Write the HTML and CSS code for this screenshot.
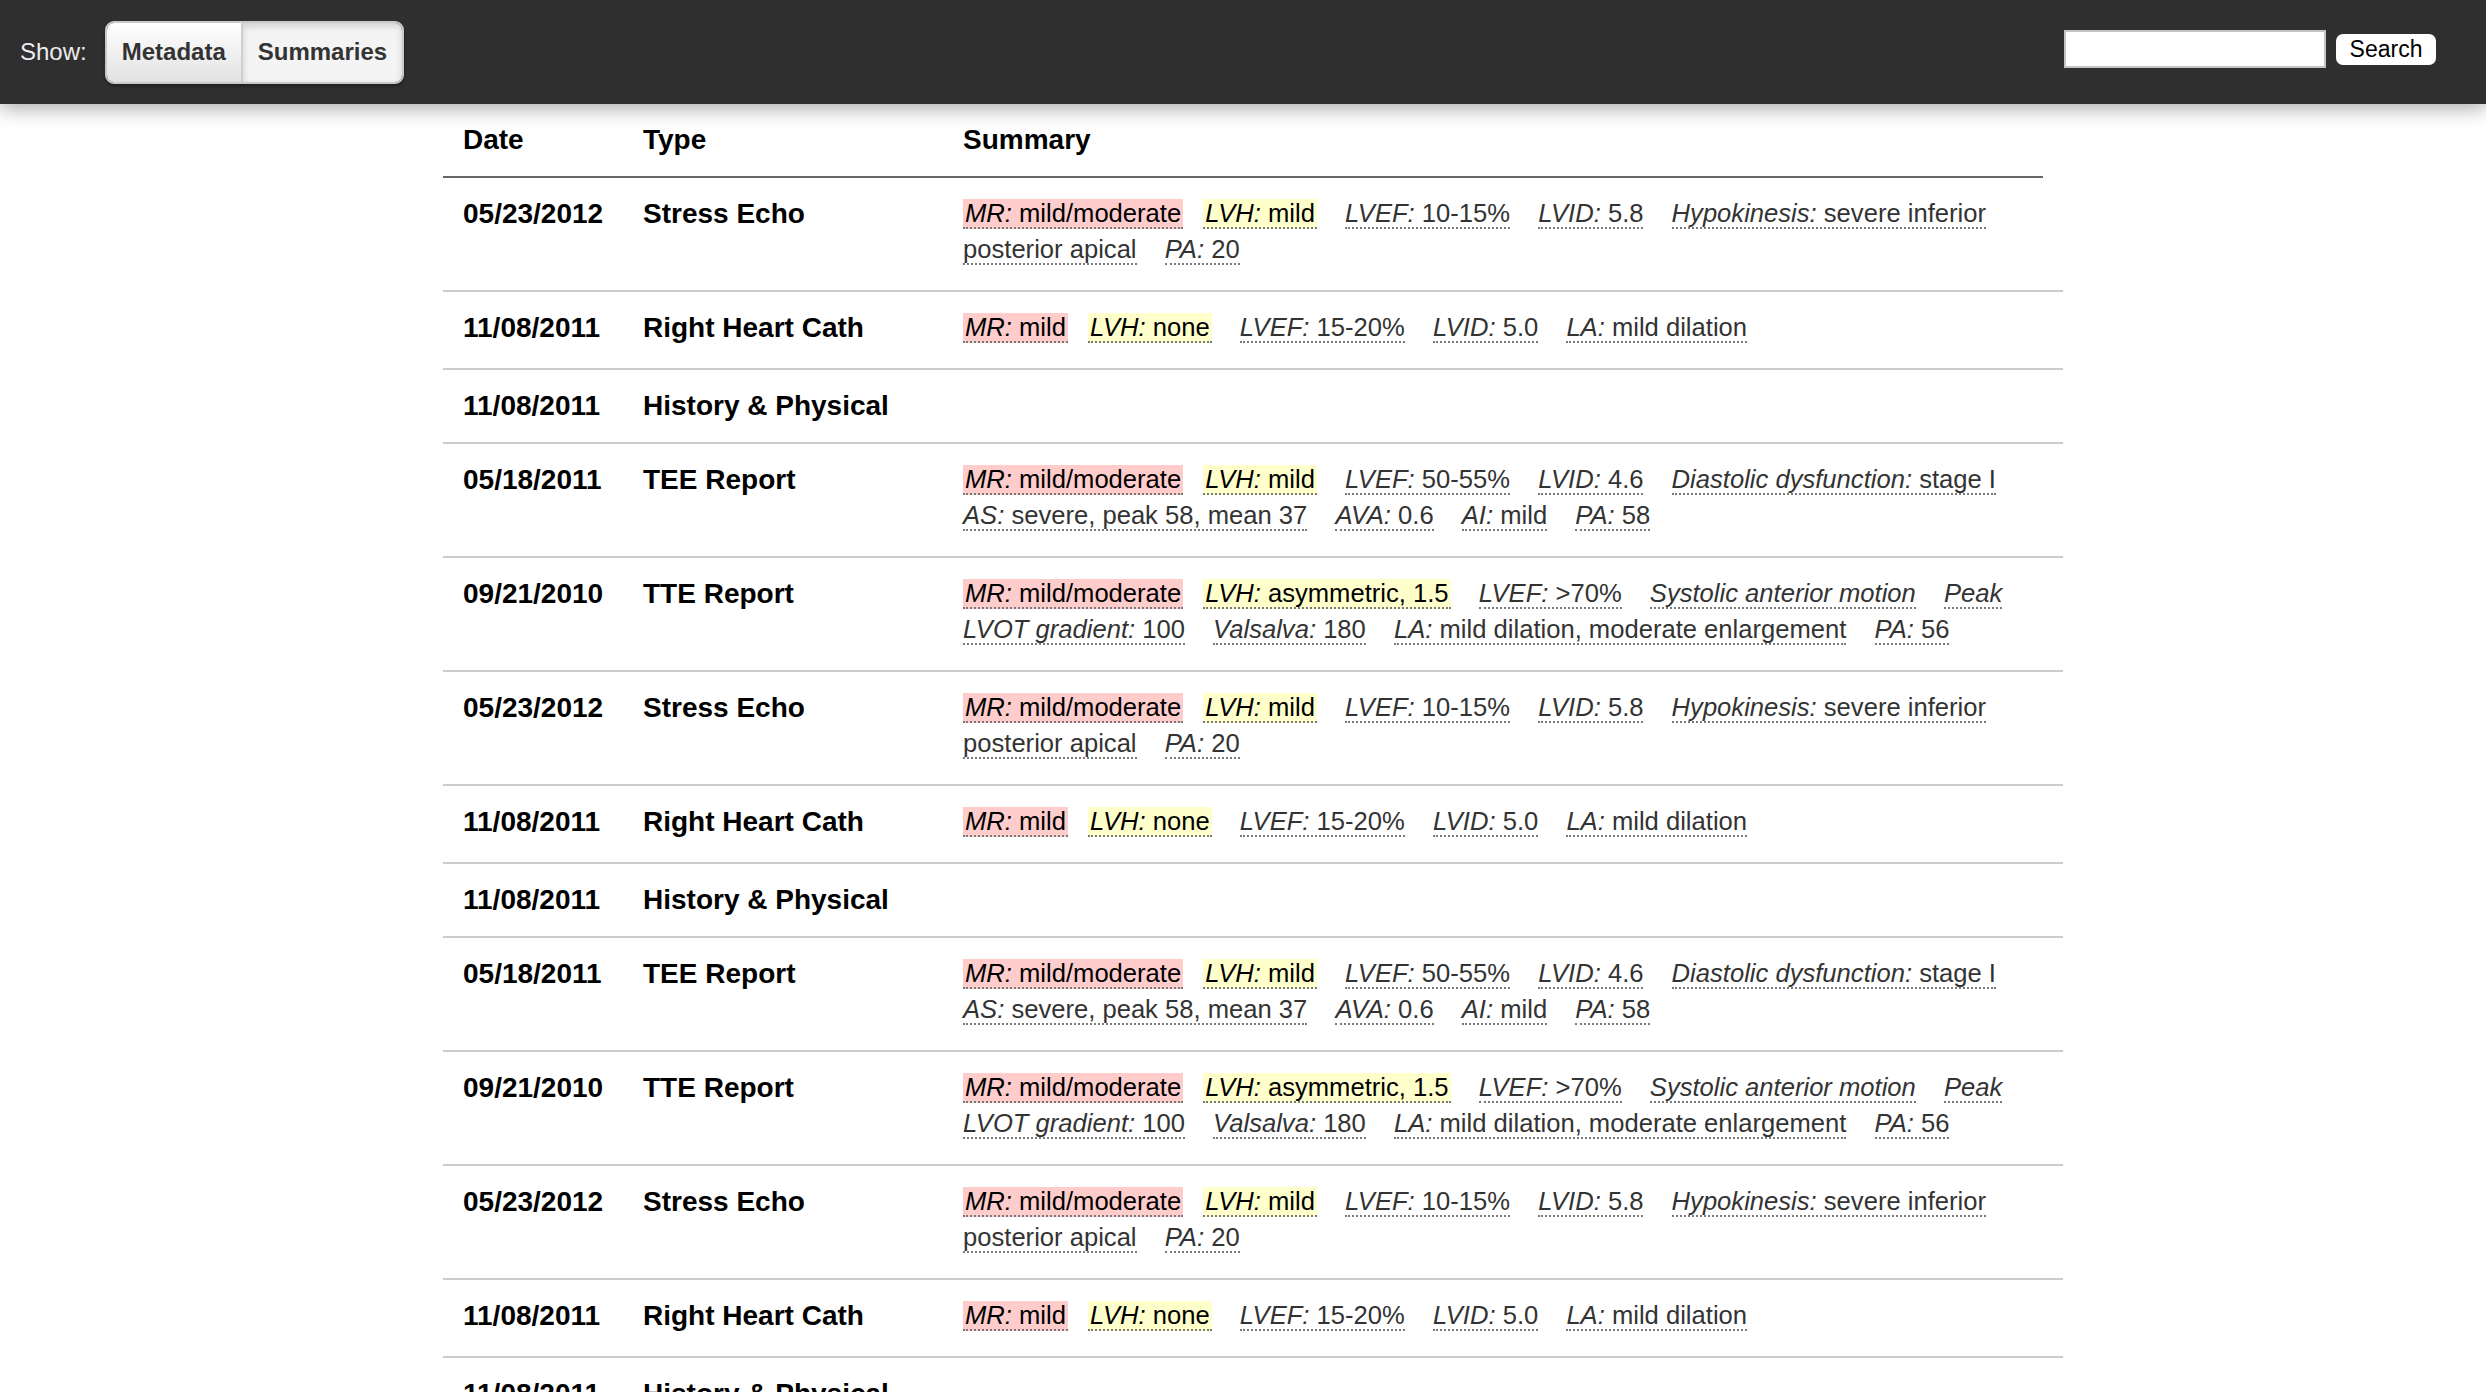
FILE: index.html
```html
<!DOCTYPE html>
<html lang="en">
<head>
<meta charset="utf-8">
<title>Reports</title>
<link rel="stylesheet" href="styles.css">
</head>
<body>
<header class="navbar">
  <div class="nav-left">
    <span class="show-label">Show:</span>
    <div class="btn-group">
      <button class="btn" type="button">Metadata</button>
      <button class="btn active" type="button">Summaries</button>
    </div>
  </div>
  <form class="search">
    <input type="text" class="search-input">
    <button type="button" class="search-btn">Search</button>
  </form>
</header>

<main class="container">
  <div class="thead">
    <div class="th">Date</div>
    <div class="th">Type</div>
    <div class="th">Summary</div>
  </div>

  <div class="row">
    <div class="cell date">05/23/2012</div>
    <div class="cell type">Stress Echo</div>
    <div class="cell summary">
      <span class="it hl hl-red"><i>MR:</i> mild/moderate</span>
      <span class="it hl hl-yellow"><i>LVH:</i> mild</span>
      <span class="it"><i>LVEF:</i> 10-15%</span>
      <span class="it"><i>LVID:</i> 5.8</span>
      <span class="it"><i>Hypokinesis:</i> severe inferior posterior apical</span>
      <span class="it"><i>PA:</i> 20</span>
    </div>
  </div>

  <div class="row">
    <div class="cell date">11/08/2011</div>
    <div class="cell type">Right Heart Cath</div>
    <div class="cell summary">
      <span class="it hl hl-red"><i>MR:</i> mild</span>
      <span class="it hl hl-yellow"><i>LVH:</i> none</span>
      <span class="it"><i>LVEF:</i> 15-20%</span>
      <span class="it"><i>LVID:</i> 5.0</span>
      <span class="it"><i>LA:</i> mild dilation</span>
    </div>
  </div>

  <div class="row">
    <div class="cell date">11/08/2011</div>
    <div class="cell type">History &amp; Physical</div>
    <div class="cell summary"></div>
  </div>

  <div class="row">
    <div class="cell date">05/18/2011</div>
    <div class="cell type">TEE Report</div>
    <div class="cell summary">
      <span class="it hl hl-red"><i>MR:</i> mild/moderate</span>
      <span class="it hl hl-yellow"><i>LVH:</i> mild</span>
      <span class="it"><i>LVEF:</i> 50-55%</span>
      <span class="it"><i>LVID:</i> 4.6</span>
      <span class="it"><i>Diastolic dysfunction:</i> stage I</span>
      <span class="it"><i>AS:</i> severe, peak 58, mean 37</span>
      <span class="it"><i>AVA:</i> 0.6</span>
      <span class="it"><i>AI:</i> mild</span>
      <span class="it"><i>PA:</i> 58</span>
    </div>
  </div>

  <div class="row">
    <div class="cell date">09/21/2010</div>
    <div class="cell type">TTE Report</div>
    <div class="cell summary">
      <span class="it hl hl-red"><i>MR:</i> mild/moderate</span>
      <span class="it hl hl-yellow"><i>LVH:</i> asymmetric, 1.5</span>
      <span class="it"><i>LVEF:</i> &gt;70%</span>
      <span class="it"><i>Systolic anterior motion</i></span>
      <span class="it"><i>Peak LVOT gradient:</i> 100</span>
      <span class="it"><i>Valsalva:</i> 180</span>
      <span class="it"><i>LA:</i> mild dilation, moderate enlargement</span>
      <span class="it"><i>PA:</i> 56</span>
    </div>
  </div>

  <div class="row">
    <div class="cell date">05/23/2012</div>
    <div class="cell type">Stress Echo</div>
    <div class="cell summary">
      <span class="it hl hl-red"><i>MR:</i> mild/moderate</span>
      <span class="it hl hl-yellow"><i>LVH:</i> mild</span>
      <span class="it"><i>LVEF:</i> 10-15%</span>
      <span class="it"><i>LVID:</i> 5.8</span>
      <span class="it"><i>Hypokinesis:</i> severe inferior posterior apical</span>
      <span class="it"><i>PA:</i> 20</span>
    </div>
  </div>

  <div class="row">
    <div class="cell date">11/08/2011</div>
    <div class="cell type">Right Heart Cath</div>
    <div class="cell summary">
      <span class="it hl hl-red"><i>MR:</i> mild</span>
      <span class="it hl hl-yellow"><i>LVH:</i> none</span>
      <span class="it"><i>LVEF:</i> 15-20%</span>
      <span class="it"><i>LVID:</i> 5.0</span>
      <span class="it"><i>LA:</i> mild dilation</span>
    </div>
  </div>

  <div class="row">
    <div class="cell date">11/08/2011</div>
    <div class="cell type">History &amp; Physical</div>
    <div class="cell summary"></div>
  </div>

  <div class="row">
    <div class="cell date">05/18/2011</div>
    <div class="cell type">TEE Report</div>
    <div class="cell summary">
      <span class="it hl hl-red"><i>MR:</i> mild/moderate</span>
      <span class="it hl hl-yellow"><i>LVH:</i> mild</span>
      <span class="it"><i>LVEF:</i> 50-55%</span>
      <span class="it"><i>LVID:</i> 4.6</span>
      <span class="it"><i>Diastolic dysfunction:</i> stage I</span>
      <span class="it"><i>AS:</i> severe, peak 58, mean 37</span>
      <span class="it"><i>AVA:</i> 0.6</span>
      <span class="it"><i>AI:</i> mild</span>
      <span class="it"><i>PA:</i> 58</span>
    </div>
  </div>

  <div class="row">
    <div class="cell date">09/21/2010</div>
    <div class="cell type">TTE Report</div>
    <div class="cell summary">
      <span class="it hl hl-red"><i>MR:</i> mild/moderate</span>
      <span class="it hl hl-yellow"><i>LVH:</i> asymmetric, 1.5</span>
      <span class="it"><i>LVEF:</i> &gt;70%</span>
      <span class="it"><i>Systolic anterior motion</i></span>
      <span class="it"><i>Peak LVOT gradient:</i> 100</span>
      <span class="it"><i>Valsalva:</i> 180</span>
      <span class="it"><i>LA:</i> mild dilation, moderate enlargement</span>
      <span class="it"><i>PA:</i> 56</span>
    </div>
  </div>

  <div class="row">
    <div class="cell date">05/23/2012</div>
    <div class="cell type">Stress Echo</div>
    <div class="cell summary">
      <span class="it hl hl-red"><i>MR:</i> mild/moderate</span>
      <span class="it hl hl-yellow"><i>LVH:</i> mild</span>
      <span class="it"><i>LVEF:</i> 10-15%</span>
      <span class="it"><i>LVID:</i> 5.8</span>
      <span class="it"><i>Hypokinesis:</i> severe inferior posterior apical</span>
      <span class="it"><i>PA:</i> 20</span>
    </div>
  </div>

  <div class="row">
    <div class="cell date">11/08/2011</div>
    <div class="cell type">Right Heart Cath</div>
    <div class="cell summary">
      <span class="it hl hl-red"><i>MR:</i> mild</span>
      <span class="it hl hl-yellow"><i>LVH:</i> none</span>
      <span class="it"><i>LVEF:</i> 15-20%</span>
      <span class="it"><i>LVID:</i> 5.0</span>
      <span class="it"><i>LA:</i> mild dilation</span>
    </div>
  </div>

  <div class="row">
    <div class="cell date">11/08/2011</div>
    <div class="cell type">History &amp; Physical</div>
    <div class="cell summary"></div>
  </div>

  <div class="row">
    <div class="cell date">05/18/2011</div>
    <div class="cell type">TEE Report</div>
    <div class="cell summary">
      <span class="it hl hl-red"><i>MR:</i> mild/moderate</span>
      <span class="it hl hl-yellow"><i>LVH:</i> mild</span>
      <span class="it"><i>LVEF:</i> 50-55%</span>
      <span class="it"><i>LVID:</i> 4.6</span>
      <span class="it"><i>Diastolic dysfunction:</i> stage I</span>
      <span class="it"><i>AS:</i> severe, peak 58, mean 37</span>
      <span class="it"><i>AVA:</i> 0.6</span>
      <span class="it"><i>AI:</i> mild</span>
      <span class="it"><i>PA:</i> 58</span>
    </div>
  </div>
</main>
</body>
</html>
```

FILE: styles.css
```css
* {
  box-sizing: border-box;
}

html, body {
  margin: 0;
  padding: 0;
  background: #fff;
}

body {
  font-family: "Liberation Sans", Arial, Helvetica, sans-serif;
  color: #000;
}

/* ---------- top bar ---------- */
.navbar {
  position: relative;
  z-index: 2;
  height: 104px;
  background: #2f2f2f;
  display: flex;
  align-items: center;
  justify-content: space-between;
  padding: 0 50px 0 20px;
  box-shadow: 0 5px 18px rgba(0, 0, 0, 0.32);
}

.nav-left {
  display: flex;
  align-items: center;
  gap: 18px;
}

.show-label {
  color: #ececec;
  font-size: 24px;
}

.btn-group {
  display: flex;
  height: 63px;
  border: 2px solid #c9c9c9;
  border-radius: 9px;
  overflow: hidden;
  box-shadow: 0 2px 3px rgba(0, 0, 0, 0.35);
}

.btn {
  font-family: "Liberation Sans", Arial, sans-serif;
  font-weight: bold;
  font-size: 24px;
  color: #333;
  border: none;
  margin: 0;
  padding: 0 15px;
  background: linear-gradient(#ffffff, #e2e2e2);
}

.btn + .btn {
  border-left: 2px solid #cfcfcf;
}

.btn.active {
  background: #f4f4f4;
  box-shadow: inset 0 3px 7px rgba(0, 0, 0, 0.16);
}

.search {
  display: flex;
  align-items: center;
  gap: 10px;
  margin: -6px 0 0 0;
}

.search-input {
  width: 262px;
  height: 38px;
  border: 2px solid #c4c4c4;
  background: #fff;
  margin: 0;
  padding: 0 4px;
}

.search-btn {
  width: 100px;
  height: 31px;
  border: none;
  border-radius: 7px;
  background: #fff;
  color: #000;
  font-family: "Liberation Sans", Arial, sans-serif;
  font-size: 23px;
  padding: 0;
  margin-top: 1px;
}

/* ---------- table ---------- */
.container {
  width: 1600px;
  margin: 0 auto;
}

.thead {
  display: grid;
  grid-template-columns: 180px 320px 1fr;
  border-bottom: 2px solid #666;
}

.th {
  padding: 20px;
  font-size: 28px;
  font-weight: bold;
  line-height: 32px;
}

.row {
  display: grid;
  grid-template-columns: 180px 320px 1fr;
  margin-right: -20px;
  border-bottom: 2px solid #cccccc;
}

.cell {
  padding: 20px;
  font-size: 28px;
  font-weight: bold;
  line-height: 32px;
}

.cell.summary {
  font-weight: normal;
  font-size: 25.6px;
  line-height: 36px;
  padding: 17px 20px 23px 20px;
  color: #333;
}

.it {
  border-bottom: 2px dotted #7a7a7a;
  margin-right: 21px;
}

.it i {
  font-style: italic;
}

.hl {
  padding: 0 2px;
  color: #000;
}

.hl + .hl {
  margin-left: -8px;
}

.hl-red {
  background: #ffcccc;
}

.hl-yellow {
  background: #ffffcc;
}
```
